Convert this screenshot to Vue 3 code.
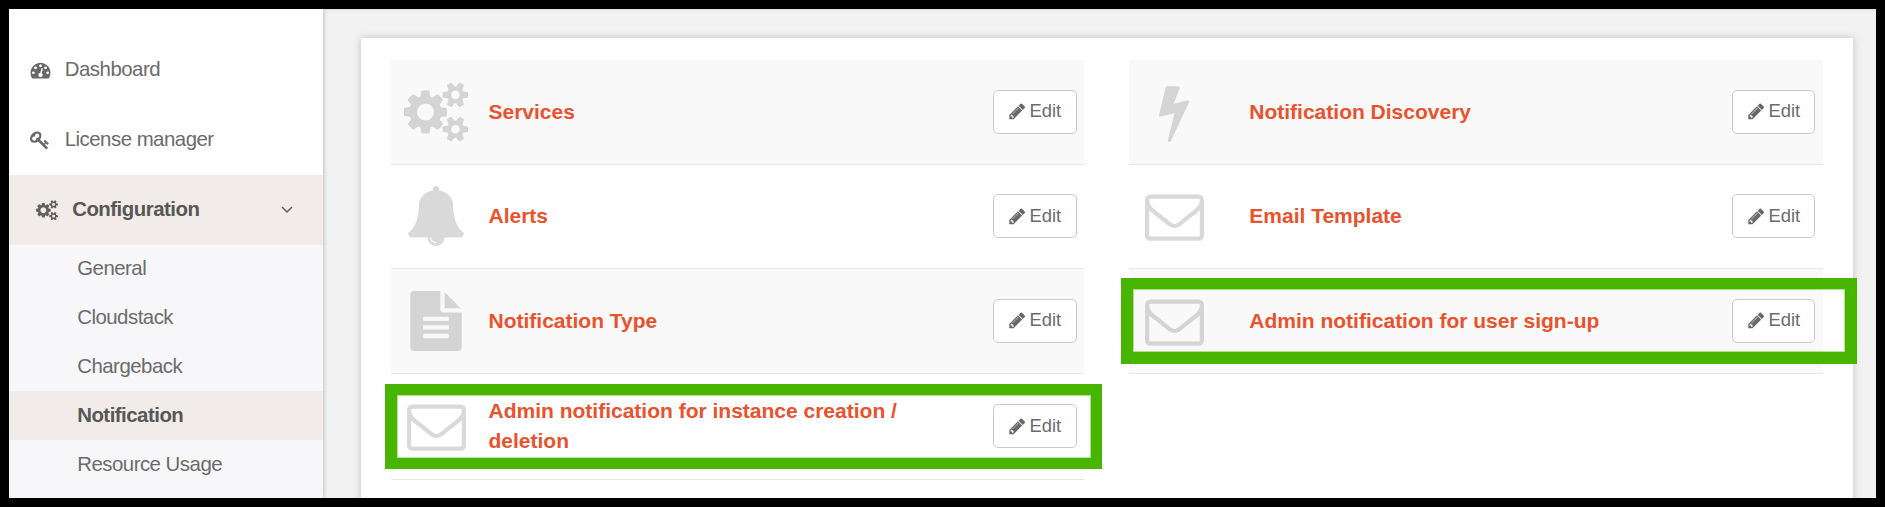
<script setup>
const icons = {
  gauge: {
    w: 1792,
    d: 'M384 1152q0-53-37.5-90.5t-90.5-37.5-90.5 37.5-37.5 90.5 37.5 90.5 90.5 37.5 90.5-37.5 37.5-90.5zm192-448q0-53-37.5-90.5t-90.5-37.5-90.5 37.5-37.5 90.5 37.5 90.5 90.5 37.5 90.5-37.5 37.5-90.5zm428 481l101-382q6-26-7.5-48.5t-38.5-29.5-48 6.5-30 39.5l-101 382q-60 5-107 43.5t-63 98.5q-20 77 20 146t117 89 146-20 89-117q16-60-6-117t-72-91zm660-33q0-53-37.5-90.5t-90.5-37.5-90.5 37.5-37.5 90.5 37.5 90.5 90.5 37.5 90.5-37.5 37.5-90.5zm-640-640q0-53-37.5-90.5t-90.5-37.5-90.5 37.5-37.5 90.5 37.5 90.5 90.5 37.5 90.5-37.5 37.5-90.5zm448 192q0-53-37.5-90.5t-90.5-37.5-90.5 37.5-37.5 90.5 37.5 90.5 90.5 37.5 90.5-37.5 37.5-90.5zm320 448q0 261-141 483-19 29-54 29h-1402q-35 0-54-29-141-221-141-483 0-182 71-348t191-286 286-191 348-71 348 71 286 191 191 286 71 348z',
  },
  key: {
    w: 1792,
    d: 'M832 512q0-80-56-136t-136-56-136 56-56 136q0 42 19 83-41-19-83-19-80 0-136 56t-56 136 56 136 136 56 136-56 56-136q0-42-19-83 41 19 83 19 80 0 136-56t56-136zm851 704q0 17-49 66t-66 49q-9 0-28.5-16t-36.5-33-38.5-40-24.5-26l-96 96 220 220q28 28 28 68 0 42-39 81t-81 39q-40 0-68-28l-671-671q-176 131-365 131-163 0-265.5-102.5t-102.5-265.5q0-160 95-313t248-248 313-95q163 0 265.5 102.5t102.5 265.5q0 189-131 365l355 355 96-96q-3-3-26-24.5t-40-38.5-33-36.5-16-28.5q0-17 49-66t66-49q13 0 23 10 6 6 46 44.5t82 79.5 86.5 86 73 78 28.5 41z',
  },
  cogs: {
    w: 1920,
    d: 'M896 896q0-106-75-181t-181-75-181 75-75 181 75 181 181 75 181-75 75-181zm768 512q0-52-38-90t-90-38-90 38-38 90q0 53 37.5 90.5t90.5 37.5 90.5-37.5 37.5-90.5zm0-1024q0-52-38-90t-90-38-90 38-38 90q0 53 37.5 90.5t90.5 37.5 90.5-37.5 37.5-90.5zm-384 421v185q0 10-7 19.5t-16 10.5l-155 24q-11 35-32 76 34 48 90 115 7 11 7 20 0 12-7 19-23 30-82.5 89.5t-78.5 59.5q-11 0-21-7l-115-90q-37 19-77 31-11 108-23 155-7 24-30 24h-186q-11 0-20-7.5t-10-17.5l-23-153q-34-10-75-31l-118 89q-7 7-20 7-11 0-21-8-144-133-144-160 0-9 7-19 10-14 41-53t47-61q-23-44-35-82l-152-24q-10-1-17-9.5t-7-19.5v-185q0-10 7-19.5t16-10.5l155-24q11-35 32-76-34-48-90-115-7-11-7-20 0-12 7-20 22-30 82-89t79-59q11 0 21 7l115 90q34-18 77-32 11-108 23-154 7-24 30-24h186q11 0 20 7.5t10 17.5l23 153q34 10 75 31l118-89q8-7 20-7 11 0 21 8 144 133 144 160 0 8-7 19-12 16-42 54t-45 60q23 48 34 82l152 23q10 2 17 10.5t7 19.5zm640 533v140q0 16-149 31-12 27-30 52 51 113 51 138 0 4-4 7-122 71-124 71-8 0-46-47t-52-68q-20 2-30 2t-30-2q-14 21-52 68t-46 47q-2 0-124-71-4-3-4-7 0-25 51-138-18-25-30-52-149-15-149-31v-140q0-16 149-31 13-29 30-52-51-113-51-138 0-4 4-7 4-2 35-20t59-34 30-16q8 0 46 46.5t52 67.5q20-2 30-2t30 2q51-71 92-112l6-2q4 0 124 70 4 3 4 7 0 25-51 138 17 23 30 52 149 15 149 31zm0-1024v140q0 16-149 31-12 27-30 52 51 113 51 138 0 4-4 7-122 71-124 71-8 0-46-47t-52-68q-20 2-30 2t-30-2q-14 21-52 68t-46 47q-2 0-124-71-4-3-4-7 0-25 51-138-18-25-30-52-149-15-149-31v-140q0-16 149-31 13-29 30-52-51-113-51-138 0-4 4-7 4-2 35-20t59-34 30-16q8 0 46 46.5t52 67.5q20-2 30-2t30 2q51-71 92-112l6-2q4 0 124 70 4 3 4 7 0 25-51 138 17 23 30 52 149 15 149 31z',
  },
  bell: {
    w: 1792,
    d: 'M912 1696q0-16-16-16-59 0-101.5-42.5t-42.5-101.5q0-16-16-16t-16 16q0 73 51.5 124.5t124.5 51.5q16 0 16-16zm816-288q0 52-38 90t-90 38h-448q0 106-75 181t-181 75-181-75-75-181h-448q-52 0-90-38t-38-90q50-42 91-88t85-119.5 74.5-158.5 50-206 19.5-260q0-152 117-282.5t307-158.5q-8-19-8-39 0-40 28-68t68-28 68 28 28 68q0 20-8 39 190 28 307 158.5t117 282.5q0 139 19.5 260t50 206 74.5 158.5 85 119.5 91 88z',
  },
  file: {
    w: 1792,
    d: 'M1596 476q14 14 28 36h-472v-472q22 14 36 28zm-476 164h544v1056q0 40-28 68t-68 28h-1344q-40 0-68-28t-28-68v-1600q0-40 28-68t68-28h800v544q0 40 28 68t68 28zm160 736v-64q0-14-9-23t-23-9h-704q-14 0-23 9t-9 23v64q0 14 9 23t23 9h704q14 0 23-9t9-23zm0-256v-64q0-14-9-23t-23-9h-704q-14 0-23 9t-9 23v64q0 14 9 23t23 9h704q14 0 23-9t9-23zm0-256v-64q0-14-9-23t-23-9h-704q-14 0-23 9t-9 23v64q0 14 9 23t23 9h704q14 0 23-9t9-23z',
  },
  bolt: {
    w: 1792,
    d: 'M1333 566q18 20 7 44l-540 1157q-13 25-42 25-4 0-14-2-17-5-25.5-19t-4.5-30l197-808-406 101q-4 1-12 1-18 0-31-11-18-15-13-39l201-825q4-16 16-26t28-10h328q19 0 32 12.5t13 29.5q0 8-5 18l-171 463 396-98q8-2 12-2 19 0 34 15z',
  },
  mail: {
    w: 1792,
    d: 'M1664 1504v-768q-32 36-69 66-268 206-426 338-51 43-83 67t-86.5 48.5-102.5 24.5h-2q-48 0-102.5-24.5t-86.5-48.5-83-67q-158-132-426-338-37-30-69-66v768q0 13 9.5 22.5t22.5 9.5h1472q13 0 22.5-9.5t9.5-22.5zm0-1051v-24.5l-.5-13-3-12.5-5.5-9-9-7.5-14-2.5h-1472q-13 0-22.5 9.5t-9.5 22.5q0 168 147 284 193 152 401 317 6 5 35 29.5t46 37.5 44.5 31.5 50.5 27.5 43 9h2q20 0 43-9t50.5-27.5 44.5-31.5 46-37.5 35-29.5q208-165 401-317 54-43 100.5-115.5t46.5-131.5zm128-37v1088q0 66-47 113t-113 47h-1472q-66 0-113-47t-47-113v-1088q0-66 47-113t113-47h1472q66 0 113 47t47 113z',
  },
  pencil: {
    w: 1792,
    d: 'M491 1536l91-91-235-235-91 91v107h128v128h107zm523-928q0-22-22-22-10 0-17 7l-542 542q-7 7-7 17 0 22 22 22 10 0 17-7l542-542q7-7 7-17zm-54-192l416 416-832 832h-416v-416zm683 96q0 53-37 90l-166 166-416-416 166-165q36-38 90-38 53 0 91 38l235 234q37 39 37 91z',
  },
}
const box = (name) => `0 0 ${icons[name].w} 1792`

const subItems = ['General', 'Cloudstack', 'Chargeback', 'Notification', 'Resource Usage']

const columns = [
  {
    side: 'left',
    rows: [
      { icon: 'cogs', title: 'Services' },
      { icon: 'bell', title: 'Alerts' },
      { icon: 'file', title: 'Notification Type' },
      { icon: 'mail', title: 'Admin notification for instance creation / deletion' },
    ],
  },
  {
    side: 'right',
    rows: [
      { icon: 'bolt', title: 'Notification Discovery' },
      { icon: 'mail', title: 'Email Template' },
      { icon: 'mail', title: 'Admin notification for user sign-up' },
    ],
  },
]
</script>

<template>
  <div class="frame">
    <nav class="sidebar">
      <a class="item">
        <svg class="nav-icon gauge" :viewBox="box('gauge')"><path :d="icons.gauge.d" /></svg>
        <span>Dashboard</span>
      </a>
      <a class="item">
        <svg class="nav-icon key" :viewBox="box('key')"><path :d="icons.key.d" /></svg>
        <span>License manager</span>
      </a>
      <a class="item open">
        <svg class="nav-icon cogs" :viewBox="box('cogs')"><path :d="icons.cogs.d" /></svg>
        <span>Configuration</span>
        <svg class="chevron" viewBox="0 0 12 8"><path d="M1 1l5 5 5-5" /></svg>
      </a>
      <div class="submenu">
        <a v-for="s in subItems" :key="s" class="sub" :class="{ active: s === 'Notification' }">{{ s }}</a>
      </div>
    </nav>

    <main class="main">
      <section class="card">
        <div v-for="c in columns" :key="c.side" class="column" :class="c.side">
          <div v-for="r in c.rows" :key="r.title" class="row">
            <div class="pic">
              <svg :class="r.icon" :viewBox="box(r.icon)"><path :d="icons[r.icon].d" /></svg>
            </div>
            <h3 class="title">{{ r.title }}</h3>
            <button class="edit">
              <svg :viewBox="box('pencil')"><path :d="icons.pencil.d" /></svg>
              <span>Edit</span>
            </button>
          </div>
        </div>
      </section>
    </main>

    <div class="highlight signup"></div>
    <div class="highlight instance"></div>
  </div>
</template>

<style>
body {
  background: #000;
  overflow: hidden;
}
</style>

<style scoped>
.frame {
  position: relative;
  box-sizing: border-box;
  width: 1885px;
  height: 507px;
  border: 9px solid #000;
  display: flex;
  overflow: hidden;
  background: #f2f2f2;
  font-family: "Liberation Sans", Arial, sans-serif;
  color: #6b6b6b;
}
.sidebar {
  position: relative;
  box-sizing: border-box;
  width: 314px;
  flex: none;
  padding-top: 26px;
  background: #fff;
  box-shadow: 0 0 5px rgba(0, 0, 0, 0.28);
  font-size: 20.4px;
  letter-spacing: -0.5px;
}
.item {
  display: flex;
  align-items: center;
  height: 70px;
  padding-left: 20.5px;
}
.item span {
  position: relative;
  top: -1px;
}
.nav-icon {
  flex: none;
  fill: #686868;
}
.gauge {
  width: 21px;
  height: 20px;
  margin-right: 14.3px;
}
.key {
  width: 20px;
  height: 20px;
  margin-right: 15.2px;
}
.item.open {
  padding-left: 27px;
  background: #f1ebe9;
  color: #575757;
  font-weight: bold;
}
.nav-icon.cogs {
  width: 22px;
  height: 20.5px;
  margin-right: 14.2px;
  fill: #606060;
}
.chevron {
  width: 12px;
  height: 8px;
  margin-left: auto;
  margin-right: 30px;
  fill: none;
  stroke: #606060;
  stroke-width: 1.5;
}
.submenu {
  height: 260px;
  background: #f7f7f9;
}
.sub {
  box-sizing: border-box;
  display: flex;
  align-items: center;
  height: 49px;
  padding: 0 0 1px 68.2px;
}
.sub:first-child {
  height: 48px;
}
.sub.active {
  background: #f1ebe9;
  color: #575757;
  font-weight: bold;
}
.main {
  flex: 1;
  padding: 29px 23px 0 38px;
  box-shadow: inset 0 3px 5px -3px rgba(0, 0, 0, 0.12);
}
.card {
  box-sizing: border-box;
  width: 1492px;
  height: 500px;
  padding: 22px 30px;
  background: #fff;
  box-shadow: 0 0 8px rgba(0, 0, 0, 0.2);
  display: flex;
  gap: 45px;
  align-items: flex-start;
}
.column {
  width: 693px;
}
.column.right {
  width: 694px;
}
.row {
  box-sizing: border-box;
  display: flex;
  align-items: center;
  height: 105px;
  padding-right: 7px;
  border-bottom: 1px solid #e6e7e9;
}
.right .row {
  padding-right: 8px;
}
.row:nth-child(even) {
  padding-bottom: 1px;
}
.row:nth-child(2) {
  height: 104px;
}
.row:nth-child(4) {
  height: 106px;
}
.row:nth-child(odd) {
  background: #f9f9f9;
}
.pic {
  display: flex;
  justify-content: center;
  width: 90px;
  flex: none;
}
.pic svg {
  height: 60px;
  width: auto;
  margin-top: -1px;
  fill: #d9d9d9;
}
.pic svg.mail {
  height: 59px;
}
.row:nth-child(odd) .pic svg {
  fill: #d5d4d4;
}
.title {
  margin: 0 auto 0 7.5px;
  width: 440px;
  font-size: 21px;
  line-height: 30px;
  font-weight: bold;
  color: #e8522d;
}
.right .title {
  margin-left: 30.3px;
}
.edit {
  box-sizing: border-box;
  display: flex;
  align-items: center;
  width: 84px;
  height: 44px;
  padding: 0 0 2px 13.5px;
  border: 1px solid #c9c9c9;
  border-radius: 5px;
  background: #fff;
  color: #6b6b6b;
  font: 18.4px "Liberation Sans", Arial, sans-serif;
}
.right .edit {
  width: 83px;
}
.row:nth-child(even) .edit {
  padding-bottom: 0;
}
.edit svg {
  width: 18.5px;
  height: 18.5px;
  margin-right: 3.5px;
  fill: #686868;
}
.highlight {
  position: absolute;
  box-sizing: border-box;
  border: 12px solid #48b500;
  border-top-width: 11px;
  box-shadow: inset 0 0 0 1px rgba(72, 181, 0, 0.4);
}
.signup {
  left: 1112px;
  top: 269px;
  width: 736px;
  height: 86px;
}
.instance {
  left: 376px;
  top: 375px;
  width: 717px;
  height: 85px;
  border-right-width: 11px;
  border-bottom-width: 11px;
}
</style>
